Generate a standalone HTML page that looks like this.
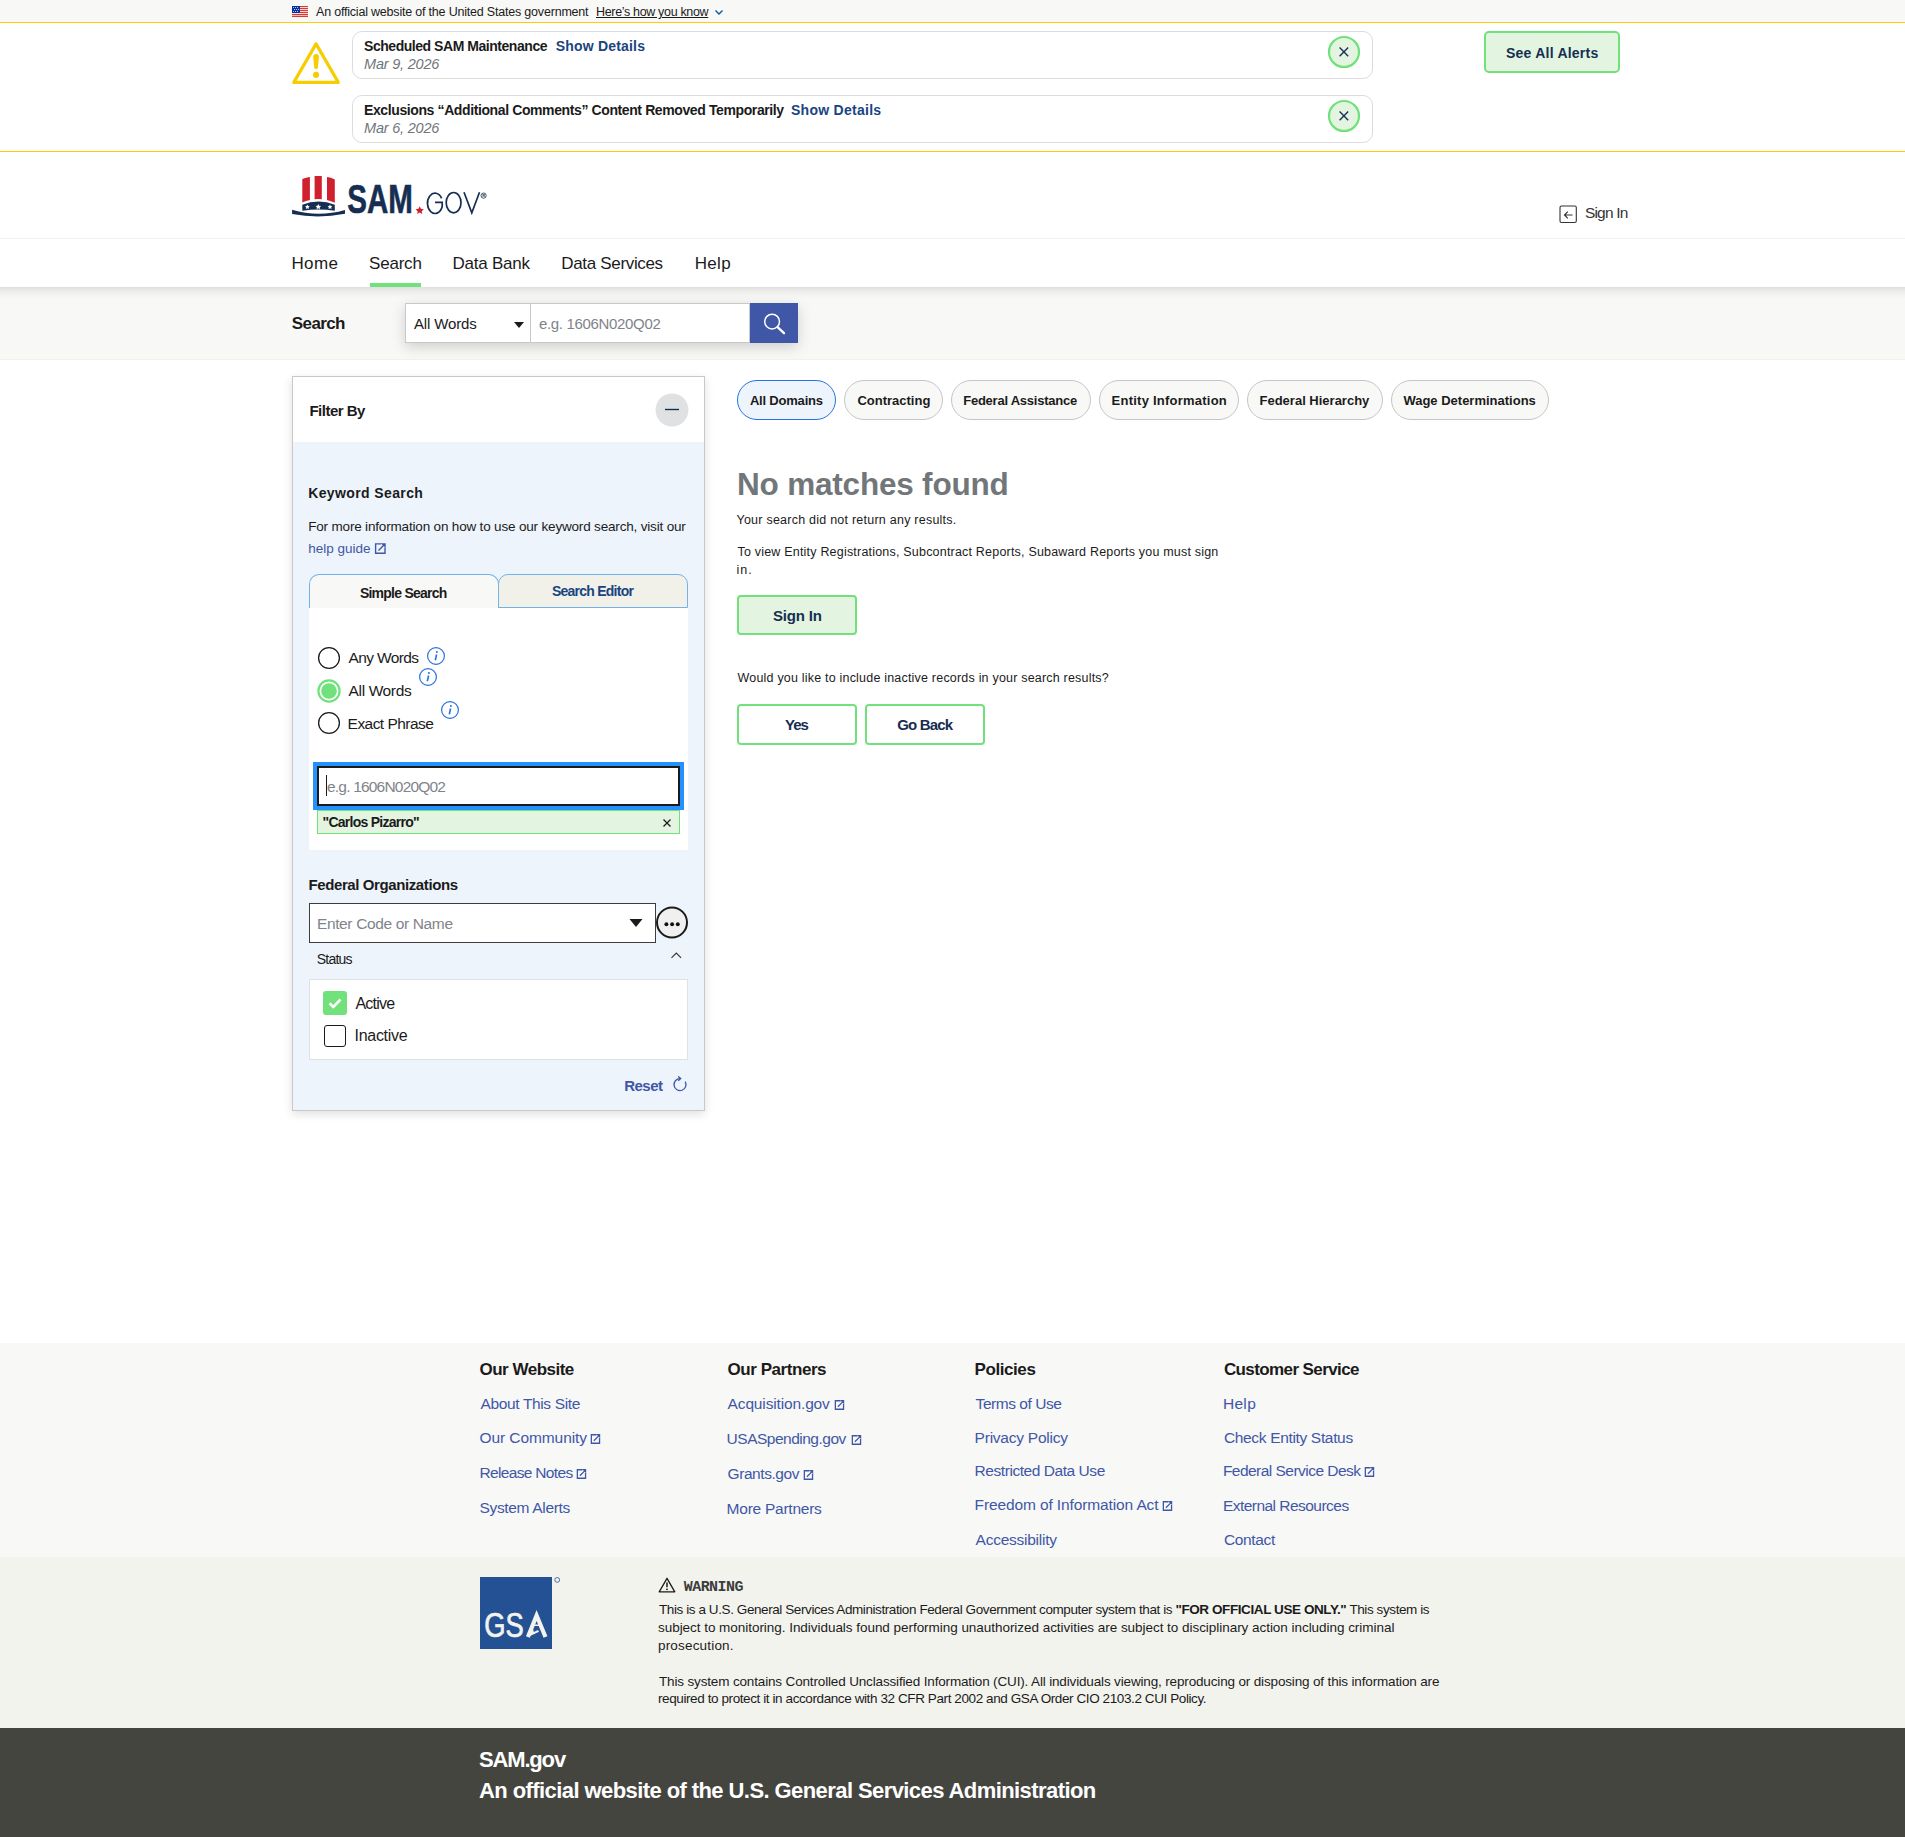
<!DOCTYPE html><html><head><meta charset="utf-8"><title>SAM.gov Search</title><style>
html,body{margin:0;padding:0;width:1905px;height:1837px;overflow:hidden;background:#fff;}
body{font-family:"Liberation Sans", sans-serif;position:relative;}
.b{position:absolute;}
.t{position:absolute;white-space:nowrap;line-height:1;}
</style></head><body>
<div class="b" style="left:0px;top:0px;width:1905px;height:22px;background:#f8f8f6;"></div>
<div class="b" style="left:0px;top:22px;width:1905px;height:1px;background:#fccd05;"></div>
<div class="b" style="left:0px;top:151px;width:1905px;height:1px;background:#fccd05;"></div>
<div class="b" style="left:0px;top:238px;width:1905px;height:1px;background:#f3f3ef;"></div>
<div class="b" style="left:0px;top:287px;width:1905px;height:72px;background:#f8f8f6;"></div>
<div class="b" style="left:0px;top:287px;width:1905px;height:11px;background:linear-gradient(#dededc,#ececea 35%,#f8f8f6);"></div>
<div class="b" style="left:0px;top:359px;width:1905px;height:1px;background:#f1f1ee;"></div>
<div class="b" style="left:370px;top:283px;width:51px;height:4px;background:#70e17b;"></div>
<svg class="b" style="left:292px;top:6px" width="16" height="11" viewBox="0 0 16 11">
<rect width="16" height="11" fill="#fff"/>
<g fill="#d83933"><rect x="0" y="0" width="16" height="1.2"/><rect x="0" y="2" width="16" height="1.2"/><rect x="0" y="4" width="16" height="1.2"/><rect x="0" y="6" width="16" height="1.2"/><rect x="0" y="8" width="16" height="1.2"/><rect x="0" y="9.8" width="16" height="1.2"/></g>
<rect x="0" y="0" width="8" height="7" fill="#0b2ea0"/>
<g fill="#fff"><circle cx="1.6" cy="1.5" r=".5"/><circle cx="3.6" cy="1.5" r=".5"/><circle cx="5.6" cy="1.5" r=".5"/><circle cx="2.6" cy="3.5" r=".5"/><circle cx="4.6" cy="3.5" r=".5"/><circle cx="6.4" cy="3.5" r=".5"/><circle cx="1.6" cy="5.5" r=".5"/><circle cx="3.6" cy="5.5" r=".5"/><circle cx="5.6" cy="5.5" r=".5"/></g></svg>
<div class="t" id="gov1" style="left:316.00px;top:6.00px;font-size:12.5px;font-weight:400;color:#1b1b1b;letter-spacing:-0.200px;">An official website of the United States government</div>
<div class="t" id="gov2" style="left:596.00px;top:6.00px;font-size:12.5px;font-weight:400;color:#1b1b1b;letter-spacing:-0.333px;text-decoration:underline;">Here’s how you know</div>
<svg class="b" style="left:714px;top:8px" width="10" height="8" viewBox="0 0 10 8"><path d="M1.5 2.5 L5 6 L8.5 2.5" fill="none" stroke="#005ea2" stroke-width="1.4"/></svg>
<svg class="b" style="left:291px;top:40px" width="50" height="46" viewBox="0 0 50 46">
<path d="M25.06 3.9 L47.3 42.4 H2.8 Z" fill="none" stroke="#f6cd00" stroke-width="3.2" stroke-linejoin="round"/>
<path d="M22.2 16.4 Q22.2 13.9 25.06 13.9 Q27.9 13.9 27.9 16.4 L26.9 27.5 Q26.8 29 25.06 29 Q23.3 29 23.2 27.5 Z" fill="#f6cd00"/>
<circle cx="25.06" cy="34.9" r="3.05" fill="#f6cd00"/></svg>
<div class="b" style="left:352px;top:31px;width:1021px;height:48px;border:1px solid #dcdcdc;border-radius:10px;box-sizing:border-box;"></div>
<div class="b" style="left:352px;top:95px;width:1021px;height:48px;border:1px solid #dcdcdc;border-radius:10px;box-sizing:border-box;"></div>
<svg class="b" style="left:1327px;top:35px" width="34" height="34" viewBox="0 0 34 34">
<circle cx="17" cy="17" r="15" fill="#e3f5e1" stroke="#70e17b" stroke-width="2.2"/>
<path d="M12.6 12.6 L21.2 21.2 M21.2 12.6 L12.6 21.2" stroke="#162e51" stroke-width="1.35"/></svg>
<svg class="b" style="left:1327px;top:99px" width="34" height="34" viewBox="0 0 34 34">
<circle cx="17" cy="17" r="15" fill="#e3f5e1" stroke="#70e17b" stroke-width="2.2"/>
<path d="M12.6 12.6 L21.2 21.2 M21.2 12.6 L12.6 21.2" stroke="#162e51" stroke-width="1.35"/></svg>
<div class="t" id="al1" style="left:364.00px;top:39.00px;font-size:14px;font-weight:700;color:#1b1b1b;letter-spacing:-0.458px;">Scheduled SAM Maintenance</div>
<div class="t" id="al1s" style="left:555.80px;top:39.00px;font-size:14px;font-weight:700;color:#1a4480;letter-spacing:0.182px;">Show Details</div>
<div class="t" id="al1d" style="left:364.00px;top:57.00px;font-size:14.5px;font-weight:400;color:#71767a;letter-spacing:-0.200px;font-style:italic;">Mar 9, 2026</div>
<div class="t" id="al2" style="left:364.00px;top:103.00px;font-size:14px;font-weight:700;color:#1b1b1b;letter-spacing:-0.390px;">Exclusions “Additional Comments” Content Removed Temporarily</div>
<div class="t" id="al2s" style="left:791.00px;top:103.00px;font-size:14px;font-weight:700;color:#1a4480;letter-spacing:0.273px;">Show Details</div>
<div class="t" id="al2d" style="left:364.00px;top:121.00px;font-size:14.5px;font-weight:400;color:#71767a;letter-spacing:-0.200px;font-style:italic;">Mar 6, 2026</div>
<div class="b" style="left:1484px;top:31px;width:136px;height:42px;background:#e3f5e1;border:2px solid #70e17b;border-radius:5px;box-sizing:border-box;"></div>
<div class="t" id="seeall" style="left:1506.00px;top:46.00px;font-size:14px;font-weight:700;color:#162e51;letter-spacing:0.231px;">See All Alerts</div>
<svg class="b" style="left:291px;top:175px" width="200" height="42" viewBox="0 0 200 42">
<path d="M11.3 4.1 Q15 2.5 18.9 1.9 L18.9 25.1 Q15 25.8 11.3 27.6 Z" fill="#d0202e"/>
<path d="M23.6 1.1 L30.8 1.1 L30.8 24.3 Q27.2 23.9 23.6 24.3 Z" fill="#d0202e"/>
<path d="M36 2 Q40 2.5 43.8 4.4 L43.8 27.8 Q40 26 36 25.1 Z" fill="#d0202e"/>
<path d="M11.3 29.8 Q27.5 23.2 43.8 29.8 L43.8 35.8 Q27.5 33 11.3 35.8 Z" fill="#162e51"/>
<path d="M1.1 34.7 Q27.3 42.5 54 34.9 L54 38.8 Q27.3 44 1.1 39 Z" fill="#162e51"/>
<g fill="#fff">
<path d="M16.4 29.4 l.75 1.55 1.7 .22 -1.25 1.15 .33 1.7 -1.53 -.83 -1.53 .83 .33 -1.7 -1.25 -1.15 1.7 -.22z"/>
<path d="M27.3 29.1 l.85 1.75 1.9 .25 -1.4 1.3 .37 1.9 -1.72 -.93 -1.72 .93 .37 -1.9 -1.4 -1.3 1.9 -.25z"/>
<path d="M39 29.4 l.75 1.55 1.7 .22 -1.25 1.15 .33 1.7 -1.53 -.83 -1.53 .83 .33 -1.7 -1.25 -1.15 1.7 -.22z"/></g>
<text x="56.3" y="37.9" font-family="Liberation Sans" font-weight="700" font-size="40.2" fill="#162e51" stroke="#162e51" stroke-width=".6" textLength="65.6" lengthAdjust="spacingAndGlyphs">SAM</text>
<path d="M128.7 31.2 l1.2 2.6 2.9 .35 -2.1 2 .55 2.85 -2.55 -1.4 -2.55 1.4 .55 -2.85 -2.1 -2 2.9 -.35z" fill="#d0202e"/>
<g fill="none" stroke="#162e51" stroke-width="1.7">
<path d="M150.6 23.3 A7.55 10.15 0 1 0 151.2 31.5 L151.2 27.4 L144 27.4"/>
<ellipse cx="162.6" cy="27.65" rx="7.4" ry="10.15"/>
<path d="M173 17.3 L180.8 37.8 L188.5 17.3"/>
<circle cx="192.6" cy="20.6" r="2.6" stroke-width=".8"/>
</g>
<text x="191.3" y="22.2" font-family="Liberation Sans" font-weight="700" font-size="4" fill="#162e51">R</text>
</svg>
<svg class="b" style="left:1559px;top:205px" width="19" height="19" viewBox="0 0 19 19">
<rect x="1" y="1" width="16.3" height="16.5" rx="1.5" fill="none" stroke="#333" stroke-width="1.1"/>
<path d="M13.5 10 H5.5 M8.8 6.7 L5.5 10 L8.8 13.3" fill="none" stroke="#333" stroke-width="1.2"/></svg>
<div class="t" id="hsign" style="left:1585.00px;top:205.00px;font-size:15.5px;font-weight:400;color:#333333;letter-spacing:-0.833px;">Sign In</div>
<div class="t" id="nav1" style="left:291.50px;top:255.00px;font-size:17px;font-weight:400;color:#1b1b1b;letter-spacing:0.333px;">Home</div>
<div class="t" id="nav2" style="left:369.00px;top:255.00px;font-size:17px;font-weight:400;color:#1b1b1b;letter-spacing:-0.200px;">Search</div>
<div class="t" id="nav3" style="left:452.60px;top:255.00px;font-size:17px;font-weight:400;color:#1b1b1b;letter-spacing:-0.250px;">Data Bank</div>
<div class="t" id="nav4" style="left:561.30px;top:255.00px;font-size:17px;font-weight:400;color:#1b1b1b;letter-spacing:-0.333px;">Data Services</div>
<div class="t" id="nav5" style="left:694.70px;top:255.00px;font-size:17px;font-weight:400;color:#1b1b1b;letter-spacing:0.333px;">Help</div>
<div class="t" id="slabel" style="left:291.80px;top:315.00px;font-size:17px;font-weight:700;color:#1b1b1b;letter-spacing:-0.600px;">Search</div>
<div class="b" style="left:405px;top:303px;width:393px;height:40px;box-shadow:0 4px 14px rgba(0,0,0,.17);background:#fff;"></div>
<div class="b" style="left:405px;top:303px;width:126px;height:40px;background:#fff;border:1px solid #c9c9c9;box-sizing:border-box;"></div>
<div class="b" style="left:530px;top:303px;width:220px;height:40px;background:#fff;border:1px solid #c9c9c9;box-sizing:border-box;"></div>
<div class="t" id="sall" style="left:413.90px;top:316.00px;font-size:15px;font-weight:400;color:#1b1b1b;letter-spacing:-0.125px;">All Words</div>
<svg class="b" style="left:513px;top:321px" width="12" height="8" viewBox="0 0 12 8"><path d="M1 1 H11 L6 7 Z" fill="#1b1b1b"/></svg>
<div class="t" id="sph" style="left:539.00px;top:316.00px;font-size:15px;font-weight:400;color:#7f8489;letter-spacing:-0.333px;">e.g. 1606N020Q02</div>
<div class="b" style="left:750px;top:303px;width:48px;height:40px;background:#3f57a6;"></div>
<svg class="b" style="left:760px;top:309px" width="28" height="28" viewBox="0 0 28 28"><circle cx="12.1" cy="12.6" r="7.4" fill="none" stroke="#fff" stroke-width="1.5"/><path d="M17.6 18.2 L24 24.2" stroke="#fff" stroke-width="2.3" stroke-linecap="round"/></svg>
<div class="b" style="left:292px;top:376px;width:413px;height:735px;background:#edf4fb;border:1px solid #c9c9c9;box-sizing:border-box;box-shadow:0 3px 9px rgba(0,0,0,.13);"></div>
<div class="b" style="left:293px;top:377px;width:411px;height:65px;background:#fff;"></div>
<div class="t" id="filterby" style="left:309.40px;top:403.00px;font-size:15px;font-weight:700;color:#1b1b1b;letter-spacing:-0.500px;">Filter By</div>
<svg class="b" style="left:655px;top:393px" width="34" height="34" viewBox="0 0 34 34"><circle cx="17" cy="17" r="16.5" fill="#dfe1e2"/><path d="M10 16.5 H24" stroke="#162e51" stroke-width="1.4"/></svg>
<div class="t" id="kw" style="left:308.20px;top:486.00px;font-size:14px;font-weight:700;color:#1b1b1b;letter-spacing:0.385px;">Keyword Search</div>
<div class="t" id="kwp" style="left:308.20px;top:520.00px;font-size:13.5px;font-weight:400;color:#1b1b1b;letter-spacing:-0.175px;">For more information on how to use our keyword search, visit our</div>
<div class="t" id="help" style="left:308.20px;top:542.00px;font-size:13.5px;font-weight:400;color:#3f57a6;letter-spacing:-0.000px;">help guide</div>
<svg class="b" style="left:374px;top:542px" width="13" height="13" viewBox="0 0 13 13"><path d="M7.2 1.9 H1.6 V11.3 H11 V5.6" fill="none" stroke="#3f57a6" stroke-width="1.4"/><path d="M4.5 8.4 L10.2 2.7" fill="none" stroke="#3f57a6" stroke-width="1.4"/><path d="M6.8 1.2 H11.7 V6.1 Z" fill="#3f57a6"/></svg>
<div class="b" style="left:309px;top:574px;width:190px;height:34px;background:#f8f8f6;border:1px solid #73b3e7;border-bottom:none;border-radius:10px 10px 0 0;box-sizing:border-box;"></div>
<div class="b" style="left:498px;top:574px;width:190px;height:34px;background:#f1f1ea;border:1px solid #73b3e7;border-radius:10px 10px 0 0;box-sizing:border-box;"></div>
<div class="b" style="left:309px;top:608px;width:379px;height:242px;background:#fff;"></div>
<div class="b" style="left:310px;top:604px;width:188px;height:4px;background:#f8f8f6;"></div>
<div class="t" id="tab1" style="left:359.90px;top:586.00px;font-size:14px;font-weight:700;color:#1b1b1b;letter-spacing:-0.750px;">Simple Search</div>
<div class="t" id="tab2" style="left:551.90px;top:584.00px;font-size:14px;font-weight:700;color:#1a4480;letter-spacing:-0.750px;">Search Editor</div>
<svg class="b" style="left:317px;top:646px" width="24" height="24" viewBox="0 0 24 24"><circle cx="12" cy="12" r="10.4" fill="#fff" stroke="#1b1b1b" stroke-width="1.3"/></svg>
<svg class="b" style="left:317px;top:679px" width="24" height="24" viewBox="0 0 24 24"><circle cx="12" cy="12" r="10.6" fill="#fff" stroke="#70e17b" stroke-width="2.2"/><circle cx="12" cy="12" r="7.8" fill="#70e17b"/></svg>
<svg class="b" style="left:317px;top:711px" width="24" height="24" viewBox="0 0 24 24"><circle cx="12" cy="12" r="10.4" fill="#fff" stroke="#1b1b1b" stroke-width="1.3"/></svg>
<div class="t" id="r1" style="left:348.60px;top:650.00px;font-size:15.5px;font-weight:400;color:#1b1b1b;letter-spacing:-0.625px;">Any Words</div>
<div class="t" id="r2" style="left:348.60px;top:683.00px;font-size:15.5px;font-weight:400;color:#1b1b1b;letter-spacing:-0.375px;">All Words</div>
<div class="t" id="r3" style="left:347.60px;top:716.00px;font-size:15.5px;font-weight:400;color:#1b1b1b;letter-spacing:-0.545px;">Exact Phrase</div>
<svg class="b" style="left:426px;top:646px" width="20" height="20" viewBox="0 0 20 20"><circle cx="10" cy="10" r="8.4" fill="none" stroke="#2672de" stroke-width="1.2"/><path d="M10.6 8.5 L9.3 14.2" stroke="#2672de" stroke-width="1.6"/><circle cx="10.9" cy="6" r="1" fill="#2672de"/></svg>
<svg class="b" style="left:418px;top:667px" width="20" height="20" viewBox="0 0 20 20"><circle cx="10" cy="10" r="8.4" fill="none" stroke="#2672de" stroke-width="1.2"/><path d="M10.6 8.5 L9.3 14.2" stroke="#2672de" stroke-width="1.6"/><circle cx="10.9" cy="6" r="1" fill="#2672de"/></svg>
<svg class="b" style="left:440px;top:700px" width="20" height="20" viewBox="0 0 20 20"><circle cx="10" cy="10" r="8.4" fill="none" stroke="#2672de" stroke-width="1.2"/><path d="M10.6 8.5 L9.3 14.2" stroke="#2672de" stroke-width="1.6"/><circle cx="10.9" cy="6" r="1" fill="#2672de"/></svg>
<div class="b" style="left:313px;top:762px;width:371px;height:48px;background:#2491ff;"></div>
<div class="b" style="left:317px;top:766px;width:363px;height:40px;background:#fff;border:2px solid #1b1b1b;box-sizing:border-box;"></div>
<div class="b" style="left:326px;top:775px;width:1px;height:21px;background:#1b1b1b;"></div>
<div class="t" id="iph" style="left:327.00px;top:779.00px;font-size:15.5px;font-weight:400;color:#7f8489;letter-spacing:-0.800px;">e.g. 1606N020Q02</div>
<div class="b" style="left:317px;top:810px;width:363px;height:24px;background:#e3f5e1;border:1px solid #70e17b;box-sizing:border-box;"></div>
<div class="t" id="chip" style="left:322.50px;top:815.00px;font-size:14px;font-weight:700;color:#1b1b1b;letter-spacing:-0.733px;">"Carlos Pizarro"</div>
<svg class="b" style="left:662px;top:818px" width="10" height="10" viewBox="0 0 10 10"><path d="M1.5 1.5 L8.5 8.5 M8.5 1.5 L1.5 8.5" stroke="#1b1b1b" stroke-width="1.3"/></svg>
<div class="t" id="fo" style="left:308.50px;top:877.00px;font-size:15px;font-weight:700;color:#1b1b1b;letter-spacing:-0.400px;">Federal Organizations</div>
<div class="b" style="left:309px;top:903px;width:347px;height:40px;background:#fff;border:1px solid #3d3d3d;box-sizing:border-box;"></div>
<div class="t" id="foph" style="left:316.90px;top:916.00px;font-size:15.5px;font-weight:400;color:#7f8489;letter-spacing:-0.353px;">Enter Code or Name</div>
<svg class="b" style="left:628px;top:917px" width="16" height="12" viewBox="0 0 16 12"><path d="M1.5 2 H14.5 L8 10 Z" fill="#1b1b1b"/></svg>
<svg class="b" style="left:655px;top:905px" width="34" height="34" viewBox="0 0 34 34"><circle cx="17" cy="17.5" r="15" fill="#f0f0f0" stroke="#1b1b1b" stroke-width="2"/><circle cx="11.4" cy="19.3" r="1.95" fill="#111"/><circle cx="17.1" cy="19.3" r="1.95" fill="#111"/><circle cx="22.8" cy="19.3" r="1.95" fill="#111"/></svg>
<div class="t" id="status" style="left:316.80px;top:952.00px;font-size:14px;font-weight:400;color:#1b1b1b;letter-spacing:-0.800px;">Status</div>
<svg class="b" style="left:669px;top:950px" width="14" height="10" viewBox="0 0 14 10"><path d="M2.5 7.8 L7.3 3 L12.1 7.8" fill="none" stroke="#333" stroke-width="1.1"/></svg>
<div class="b" style="left:309px;top:979px;width:379px;height:81px;background:#fff;border:1px solid #dfe1e2;box-sizing:border-box;"></div>
<div class="b" style="left:323px;top:991px;width:24px;height:24px;background:#70e17b;border-radius:3px;"></div>
<svg class="b" style="left:323px;top:991px" width="24" height="24" viewBox="0 0 24 24"><path d="M6.5 12.3 L10.3 16 L17.5 8.5" fill="none" stroke="#fff" stroke-width="2.6"/></svg>
<div class="b" style="left:324px;top:1025px;width:22px;height:22px;background:#fff;border:1.6px solid #1b1b1b;border-radius:3px;box-sizing:border-box;"></div>
<div class="t" id="act" style="left:355.50px;top:996.00px;font-size:16px;font-weight:400;color:#1b1b1b;letter-spacing:-0.800px;">Active</div>
<div class="t" id="inact" style="left:354.50px;top:1028.00px;font-size:16px;font-weight:400;color:#1b1b1b;letter-spacing:-0.286px;">Inactive</div>
<div class="t" id="reset" style="left:624.20px;top:1078.00px;font-size:15px;font-weight:700;color:#3f57a6;letter-spacing:-0.500px;">Reset</div>
<svg class="b" style="left:671px;top:1076px" width="17" height="17" viewBox="0 0 17 17"><path d="M9 2.6 A6 6 0 1 0 14.2 5.6" fill="none" stroke="#3f57a6" stroke-width="1.3"/><path d="M7.2 0.4 L9.7 2.6 L7.2 4.8" fill="none" stroke="#3f57a6" stroke-width="1.3"/></svg>
<div class="b" style="left:737px;top:380px;width:99px;height:40px;background:#edf4fb;border:1.5px solid #2672de;border-radius:20px;box-sizing:border-box;"></div>
<div class="t" id="pill0" style="left:749.90px;top:394.00px;font-size:13px;font-weight:700;color:#1b1b1b;letter-spacing:-0.200px;">All Domains</div>
<div class="b" style="left:844px;top:380px;width:99px;height:40px;background:#f8f8f6;border:1px solid #c6c6c6;border-radius:20px;box-sizing:border-box;"></div>
<div class="t" id="pill1" style="left:857.40px;top:394.00px;font-size:13px;font-weight:700;color:#1b1b1b;letter-spacing:0.000px;">Contracting</div>
<div class="b" style="left:951px;top:380px;width:140px;height:40px;background:#f8f8f6;border:1px solid #c6c6c6;border-radius:20px;box-sizing:border-box;"></div>
<div class="t" id="pill2" style="left:963.20px;top:394.00px;font-size:13px;font-weight:700;color:#1b1b1b;letter-spacing:-0.235px;">Federal Assistance</div>
<div class="b" style="left:1099px;top:380px;width:140px;height:40px;background:#f8f8f6;border:1px solid #c6c6c6;border-radius:20px;box-sizing:border-box;"></div>
<div class="t" id="pill3" style="left:1111.60px;top:394.00px;font-size:13px;font-weight:700;color:#1b1b1b;letter-spacing:0.235px;">Entity Information</div>
<div class="b" style="left:1247px;top:380px;width:136px;height:40px;background:#f8f8f6;border:1px solid #c6c6c6;border-radius:20px;box-sizing:border-box;"></div>
<div class="t" id="pill4" style="left:1259.50px;top:394.00px;font-size:13px;font-weight:700;color:#1b1b1b;letter-spacing:0.000px;">Federal Hierarchy</div>
<div class="b" style="left:1391px;top:380px;width:158px;height:40px;background:#f8f8f6;border:1px solid #c6c6c6;border-radius:20px;box-sizing:border-box;"></div>
<div class="t" id="pill5" style="left:1403.40px;top:394.00px;font-size:13px;font-weight:700;color:#1b1b1b;letter-spacing:0.000px;">Wage Determinations</div>
<div class="t" id="nomatch" style="left:737.00px;top:469.00px;font-size:31.5px;font-weight:700;color:#71767a;letter-spacing:-0.200px;">No matches found</div>
<div class="t" id="res1" style="left:736.50px;top:514.00px;font-size:12.5px;font-weight:400;color:#1b1b1b;letter-spacing:0.237px;">Your search did not return any results.</div>
<div class="t" id="res2" style="left:737.50px;top:546.00px;font-size:12.5px;font-weight:400;color:#1b1b1b;letter-spacing:0.200px;">To view Entity Registrations, Subcontract Reports, Subaward Reports you must sign</div>
<div class="t" id="res3" style="left:736.50px;top:564.00px;font-size:12.5px;font-weight:400;color:#1b1b1b;letter-spacing:1.000px;">in.</div>
<div class="b" style="left:737px;top:595px;width:120px;height:40px;background:#e3f5e1;border:2px solid #70e17b;border-radius:4px;box-sizing:border-box;"></div>
<div class="t" id="bsign" style="left:773.00px;top:608.00px;font-size:15px;font-weight:700;color:#162e51;letter-spacing:-0.167px;">Sign In</div>
<div class="t" id="res4" style="left:737.50px;top:672.00px;font-size:12.5px;font-weight:400;color:#1b1b1b;letter-spacing:0.200px;">Would you like to include inactive records in your search results?</div>
<div class="b" style="left:737px;top:704px;width:120px;height:41px;background:#fff;border:2px solid #70e17b;border-radius:4px;box-sizing:border-box;"></div>
<div class="b" style="left:865px;top:704px;width:120px;height:41px;background:#fff;border:2px solid #70e17b;border-radius:4px;box-sizing:border-box;"></div>
<div class="t" id="byes" style="left:785.00px;top:717.00px;font-size:15px;font-weight:700;color:#162e51;letter-spacing:-1.000px;">Yes</div>
<div class="t" id="bgo" style="left:897.20px;top:717.00px;font-size:15px;font-weight:700;color:#162e51;letter-spacing:-0.833px;">Go Back</div>
<div class="b" style="left:0px;top:1343px;width:1905px;height:214px;background:#f8f8f6;"></div>
<div class="b" style="left:0px;top:1557px;width:1905px;height:171px;background:#f3f3ee;"></div>
<div class="b" style="left:0px;top:1728px;width:1905px;height:109px;background:#45453f;"></div>
<div class="t" id="fh1" style="left:479.50px;top:1361.00px;font-size:17px;font-weight:700;color:#1b1b1b;letter-spacing:-0.500px;">Our Website</div>
<div class="t" id="fh2" style="left:727.60px;top:1361.00px;font-size:17px;font-weight:700;color:#1b1b1b;letter-spacing:-0.455px;">Our Partners</div>
<div class="t" id="fh3" style="left:974.60px;top:1361.00px;font-size:17px;font-weight:700;color:#1b1b1b;letter-spacing:-0.429px;">Policies</div>
<div class="t" id="fh4" style="left:1223.90px;top:1361.00px;font-size:17px;font-weight:700;color:#1b1b1b;letter-spacing:-0.600px;">Customer Service</div>
<div class="t" id="l11" style="left:480.50px;top:1396.00px;font-size:15.5px;font-weight:400;color:#3f57a6;letter-spacing:-0.357px;">About This Site</div>
<div class="t" id="l12" style="left:479.50px;top:1430.00px;font-size:15.5px;font-weight:400;color:#3f57a6;letter-spacing:-0.083px;">Our Community</div>
<svg class="b" style="left:590.4px;top:1433.4px" width="12" height="12" viewBox="0 0 12 12"><path d="M6.6 1.75 H1.35 V10.25 H9.55 V5" fill="none" stroke="#3f57a6" stroke-width="1.3"/><path d="M3.9 7.7 L9 2.6" fill="none" stroke="#3f57a6" stroke-width="1.3"/><path d="M6.1 1.1 H10.2 V5.2 Z" fill="#3f57a6"/></svg>
<div class="t" id="l13" style="left:479.50px;top:1465.00px;font-size:15.5px;font-weight:400;color:#3f57a6;letter-spacing:-0.667px;">Release Notes</div>
<svg class="b" style="left:576.0px;top:1468.3px" width="12" height="12" viewBox="0 0 12 12"><path d="M6.6 1.75 H1.35 V10.25 H9.55 V5" fill="none" stroke="#3f57a6" stroke-width="1.3"/><path d="M3.9 7.7 L9 2.6" fill="none" stroke="#3f57a6" stroke-width="1.3"/><path d="M6.1 1.1 H10.2 V5.2 Z" fill="#3f57a6"/></svg>
<div class="t" id="l14" style="left:479.50px;top:1500.00px;font-size:15.5px;font-weight:400;color:#3f57a6;letter-spacing:-0.333px;">System Alerts</div>
<div class="t" id="l21" style="left:727.60px;top:1396.00px;font-size:15.5px;font-weight:400;color:#3f57a6;letter-spacing:-0.143px;">Acquisition.gov</div>
<svg class="b" style="left:834.0px;top:1398.7px" width="12" height="12" viewBox="0 0 12 12"><path d="M6.6 1.75 H1.35 V10.25 H9.55 V5" fill="none" stroke="#3f57a6" stroke-width="1.3"/><path d="M3.9 7.7 L9 2.6" fill="none" stroke="#3f57a6" stroke-width="1.3"/><path d="M6.1 1.1 H10.2 V5.2 Z" fill="#3f57a6"/></svg>
<div class="t" id="l22" style="left:726.60px;top:1431.00px;font-size:15.5px;font-weight:400;color:#3f57a6;letter-spacing:-0.500px;">USASpending.gov</div>
<svg class="b" style="left:851.0px;top:1434.2px" width="12" height="12" viewBox="0 0 12 12"><path d="M6.6 1.75 H1.35 V10.25 H9.55 V5" fill="none" stroke="#3f57a6" stroke-width="1.3"/><path d="M3.9 7.7 L9 2.6" fill="none" stroke="#3f57a6" stroke-width="1.3"/><path d="M6.1 1.1 H10.2 V5.2 Z" fill="#3f57a6"/></svg>
<div class="t" id="l23" style="left:727.60px;top:1466.00px;font-size:15.5px;font-weight:400;color:#3f57a6;letter-spacing:-0.444px;">Grants.gov</div>
<svg class="b" style="left:803.0px;top:1469.0px" width="12" height="12" viewBox="0 0 12 12"><path d="M6.6 1.75 H1.35 V10.25 H9.55 V5" fill="none" stroke="#3f57a6" stroke-width="1.3"/><path d="M3.9 7.7 L9 2.6" fill="none" stroke="#3f57a6" stroke-width="1.3"/><path d="M6.1 1.1 H10.2 V5.2 Z" fill="#3f57a6"/></svg>
<div class="t" id="l24" style="left:726.60px;top:1501.00px;font-size:15.5px;font-weight:400;color:#3f57a6;letter-spacing:-0.250px;">More Partners</div>
<div class="t" id="l31" style="left:975.60px;top:1396.00px;font-size:15.5px;font-weight:400;color:#3f57a6;letter-spacing:-0.455px;">Terms of Use</div>
<div class="t" id="l32" style="left:974.60px;top:1430.00px;font-size:15.5px;font-weight:400;color:#3f57a6;letter-spacing:-0.231px;">Privacy Policy</div>
<div class="t" id="l33" style="left:974.60px;top:1463.00px;font-size:15.5px;font-weight:400;color:#3f57a6;letter-spacing:-0.444px;">Restricted Data Use</div>
<div class="t" id="l34" style="left:974.60px;top:1497.00px;font-size:15.5px;font-weight:400;color:#3f57a6;letter-spacing:-0.120px;">Freedom of Information Act</div>
<svg class="b" style="left:1162.0px;top:1500.0px" width="12" height="12" viewBox="0 0 12 12"><path d="M6.6 1.75 H1.35 V10.25 H9.55 V5" fill="none" stroke="#3f57a6" stroke-width="1.3"/><path d="M3.9 7.7 L9 2.6" fill="none" stroke="#3f57a6" stroke-width="1.3"/><path d="M6.1 1.1 H10.2 V5.2 Z" fill="#3f57a6"/></svg>
<div class="t" id="l35" style="left:975.60px;top:1532.00px;font-size:15.5px;font-weight:400;color:#3f57a6;letter-spacing:-0.250px;">Accessibility</div>
<div class="t" id="l41" style="left:1222.90px;top:1396.00px;font-size:15.5px;font-weight:400;color:#3f57a6;letter-spacing:0.333px;">Help</div>
<div class="t" id="l42" style="left:1223.90px;top:1430.00px;font-size:15.5px;font-weight:400;color:#3f57a6;letter-spacing:-0.333px;">Check Entity Status</div>
<div class="t" id="l43" style="left:1222.90px;top:1463.00px;font-size:15.5px;font-weight:400;color:#3f57a6;letter-spacing:-0.526px;">Federal Service Desk</div>
<svg class="b" style="left:1364.0px;top:1465.7px" width="12" height="12" viewBox="0 0 12 12"><path d="M6.6 1.75 H1.35 V10.25 H9.55 V5" fill="none" stroke="#3f57a6" stroke-width="1.3"/><path d="M3.9 7.7 L9 2.6" fill="none" stroke="#3f57a6" stroke-width="1.3"/><path d="M6.1 1.1 H10.2 V5.2 Z" fill="#3f57a6"/></svg>
<div class="t" id="l44" style="left:1222.90px;top:1498.00px;font-size:15.5px;font-weight:400;color:#3f57a6;letter-spacing:-0.529px;">External Resources</div>
<div class="t" id="l45" style="left:1223.90px;top:1532.00px;font-size:15.5px;font-weight:400;color:#3f57a6;letter-spacing:-0.333px;">Contact</div>
<svg class="b" style="left:480px;top:1577px" width="84" height="73" viewBox="0 0 84 73">
<rect x="0" y="0" width="72" height="72" fill="#245194"/>
<text x="4.2" y="60.3" font-family="Liberation Sans" font-weight="400" font-size="35" fill="#f3f3ee" stroke="#f3f3ee" stroke-width=".7" textLength="39.5" lengthAdjust="spacingAndGlyphs">GS</text>
<path d="M47.9 60 L56.6 38.5 L65.5 60" fill="none" stroke="#f3f3ee" stroke-width="4.2" stroke-linejoin="miter"/>
<path d="M52.2 48.9 L53.9 55 L57.9 53.1 L59.1 54.8 L48 60 Z" fill="#f3f3ee"/>
<path d="M51.5 47.4 H61.6 L60.8 49 H52.5 Z" fill="#f3f3ee"/>
<circle cx="77.2" cy="2.9" r="2.4" fill="none" stroke="#245194" stroke-width=".8"/>
</svg>
<svg class="b" style="left:658px;top:1577px" width="18" height="16" viewBox="0 0 18 16"><path d="M9 1.3 L16.8 14.8 H1.2 Z" fill="none" stroke="#1b1b1b" stroke-width="1.3" stroke-linejoin="round"/><path d="M9 5.5 V10.3" stroke="#1b1b1b" stroke-width="1.5"/><circle cx="9" cy="12.3" r=".9" fill="#1b1b1b"/></svg>
<div class="t" id="warn" style="left:683.80px;top:1580.00px;font-size:15px;font-weight:700;color:#3d3d3d;letter-spacing:-0.567px;font-family:'Liberation Mono', monospace;">WARNING</div>
<div class="t" id="w1" style="left:659.00px;top:1603.00px;font-size:13.5px;font-weight:400;color:#1b1b1b;letter-spacing:-0.414px;">This is a U.S. General Services Administration Federal Government computer system that is <b>"FOR OFFICIAL USE ONLY."</b> This system is</div>
<div class="t" id="w2" style="left:658.00px;top:1621.00px;font-size:13.5px;font-weight:400;color:#1b1b1b;letter-spacing:-0.039px;">subject to monitoring. Individuals found performing unauthorized activities are subject to disciplinary action including criminal</div>
<div class="t" id="w3" style="left:658.00px;top:1639.00px;font-size:13.5px;font-weight:400;color:#1b1b1b;letter-spacing:0.182px;">prosecution.</div>
<div class="t" id="w4" style="left:659.00px;top:1675.00px;font-size:13.5px;font-weight:400;color:#1b1b1b;letter-spacing:-0.154px;">This system contains Controlled Unclassified Information (CUI). All individuals viewing, reproducing or disposing of this information are</div>
<div class="t" id="w5" style="left:658.00px;top:1692.00px;font-size:13.5px;font-weight:400;color:#1b1b1b;letter-spacing:-0.404px;">required to protect it in accordance with 32 CFR Part 2002 and GSA Order CIO 2103.2 CUI Policy.</div>
<div class="t" id="sam" style="left:479.00px;top:1749.00px;font-size:22px;font-weight:700;color:#fff;letter-spacing:-1.167px;">SAM.gov</div>
<div class="t" id="gsa" style="left:479.00px;top:1780.00px;font-size:22px;font-weight:700;color:#fff;letter-spacing:-0.581px;">An official website of the U.S. General Services Administration</div>
</body></html>
